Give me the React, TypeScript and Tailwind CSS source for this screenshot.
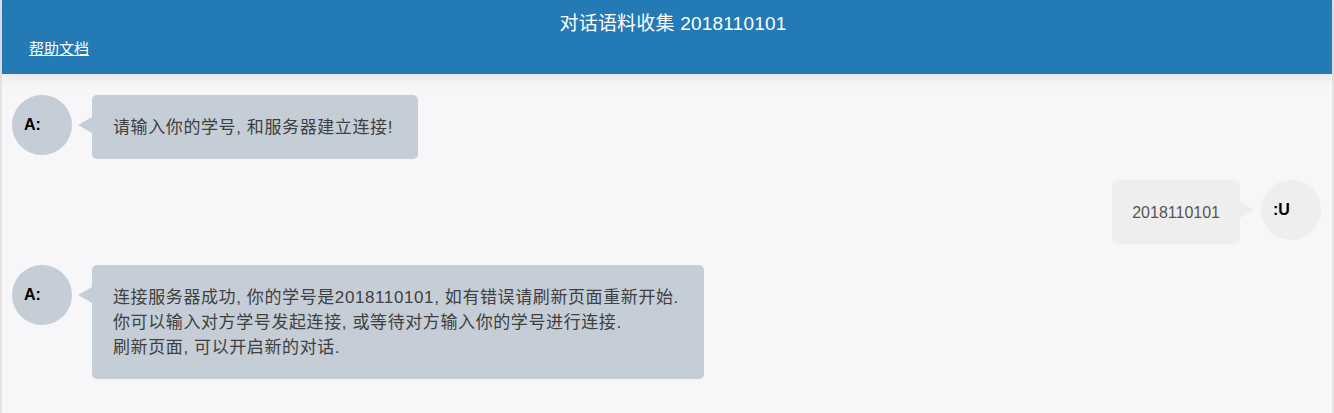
import React from "react";

const font = "font-['Liberation_Sans','Noto_Sans_CJK_SC',sans-serif]";

const LeftMsg = ({ lines }: { lines: string[] }) => (
  <div className="flex items-start pl-[10px]">
    <div className="w-[60px] h-[60px] rounded-full bg-[#c5cdd6] flex items-center pl-[12px] text-[16px] font-bold text-black shrink-0">
      A:
    </div>
    <div className="relative ml-[20px] bg-[#c5cdd6] rounded-[5px] pl-[21px] pr-[25px] pt-[20px] pb-[19px] text-[17px] leading-[25px] tracking-[0.6px] text-[#404040]">
      <span className="absolute left-[-14px] top-[22px] w-0 h-0 border-y-[8px] border-y-transparent border-r-[14px] border-r-[#c5cdd6]" />
      {lines.map((l) => (
        <div key={l}>{l}</div>
      ))}
    </div>
  </div>
);

const RightMsg = ({ text }: { text: string }) => (
  <div className="flex items-start justify-end pr-[11px]">
    <div className="relative mr-[21px] bg-[#eeeeee] rounded-[5px] px-[20px] pt-[20px] pb-[19px] text-[16px] leading-[25px] text-[#555]">
      <span className="absolute right-[-15px] top-[22px] w-0 h-0 border-y-[8px] border-y-transparent border-l-[15px] border-l-[#eeeeee]" />
      {text}
    </div>
    <div className="w-[60px] h-[60px] rounded-full bg-[#eeeeee] flex items-center pl-[12px] text-[16px] font-bold text-black shrink-0">
      :U
    </div>
  </div>
);

export default function App() {
  return (
    <div className={`${font} min-h-[413px] bg-white`}>
      <div className="min-h-[413px] border-x-2 border-[#e4e4e4] flex flex-col bg-[#f7f7f9]">
        <header className="relative z-10 h-[74px] bg-[#237ab4] text-white shadow-[0_3px_14px_rgba(0,0,0,0.09)] flex flex-col">
          <h1 className="pt-[12px] text-center text-[19px] leading-[24px] tracking-[0.2px] pl-[12px]">
            对话语料收集 2018110101
          </h1>
          <a href="#" className="mt-[3px] ml-[27px] text-[15px] leading-[20px] underline w-fit">
            帮助文档
          </a>
        </header>
        <main className="flex-1 flex flex-col gap-[21px] pt-[21px] pb-[20px]">
          <LeftMsg lines={["请输入你的学号, 和服务器建立连接!"]} />
          <RightMsg text="2018110101" />
          <LeftMsg
            lines={[
              "连接服务器成功, 你的学号是2018110101, 如有错误请刷新页面重新开始.",
              "你可以输入对方学号发起连接, 或等待对方输入你的学号进行连接.",
              "刷新页面, 可以开启新的对话.",
            ]}
          />
        </main>
      </div>
    </div>
  );
}
